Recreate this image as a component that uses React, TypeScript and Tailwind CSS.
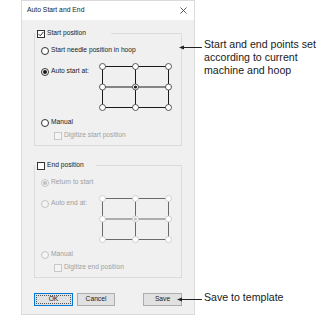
import React from "react";

type BoxProps = { checked?: boolean; disabled?: boolean };

const Radio: React.FC<BoxProps> = ({ checked, disabled }) => (
	<span
		className={
			disabled
				? "w-[8px] h-[8px] rounded-full border border-[#c4c4c4] bg-[#f4f4f4] flex items-center justify-center shrink-0"
				: "w-[8px] h-[8px] rounded-full border border-[#333] bg-white flex items-center justify-center shrink-0"
		}
	>
		{checked && (
			<span
				className={
					disabled
						? "w-[4px] h-[4px] rounded-full bg-[#c0c0c0]"
						: "w-[4px] h-[4px] rounded-full bg-[#1a1a1a]"
				}
			/>
		)}
	</span>
);

const Check: React.FC<BoxProps> = ({ checked, disabled }) => (
	<span
		className={
			disabled
				? "w-[8px] h-[8px] border border-[#c8c8c8] bg-[#f4f4f4] flex items-center justify-center shrink-0"
				: "w-[8px] h-[8px] border border-[#333] bg-white flex items-center justify-center shrink-0"
		}
	>
		{checked && (
			<svg width="6" height="6" viewBox="0 0 6 6">
				<path d="M0.6 3.1 L2.3 4.8 L5.4 0.9" fill="none" stroke="#1a1a1a" strokeWidth="0.9" />
			</svg>
		)}
	</span>
);

// 3x3 hoop position grid
const HoopGrid: React.FC<{ disabled?: boolean }> = ({ disabled }) => {
	const xs = [3.5, 36.5, 69.5];
	const ys = [3.5, 24, 44.5];
	const line = disabled ? "#6a6a6a" : "#1a1a1a";
	const ring = disabled ? "#c4c4c4" : "#333";
	return (
		<svg width="74" height="48" viewBox="0 0 74 48" className="shrink-0">
			{ys.map((y) => (
				<line key={`h${y}`} x1={xs[0]} y1={y} x2={xs[2]} y2={y} stroke={line} strokeWidth="1" />
			))}
			{xs.map((x) => (
				<line key={`v${x}`} x1={x} y1={ys[0]} x2={x} y2={ys[2]} stroke={line} strokeWidth="1" />
			))}
			{ys.map((y) =>
				xs.map((x) => (
					<circle key={`${x}-${y}`} cx={x} cy={y} r="3" fill="white" stroke={ring} strokeWidth="0.8" />
				))
			)}
			<circle cx={xs[1]} cy={ys[1]} r="1.6" fill={disabled ? "#c0c0c0" : "#1a1a1a"} />
		</svg>
	);
};

const Arrow: React.FC<{ width: number }> = ({ width }) => (
	<svg width={width} height="5" viewBox={`0 0 ${width} 5`}>
		<line x1="3" y1="2.5" x2={width} y2="2.5" stroke="#222" strokeWidth="1" />
		<path d="M0 2.5 L5 0.6 L5 4.4 Z" fill="#222" />
	</svg>
);

export default function App() {
	return (
		<div className="relative w-[329px] h-[331px] bg-white font-['Liberation_Sans',Arial,sans-serif] text-[6.7px] text-[#1a1a1a] overflow-hidden">
			{/* Dialog */}
			<div className="ml-[21px] w-[174px] h-[315px] border border-[#dadada] bg-[#f0f0f0] flex flex-col">
				<div className="h-[19px] bg-white flex items-center justify-between pl-[5px] pr-[7px]">
					<span className="text-[6.8px]">Auto Start and End</span>
					<svg width="7" height="7" viewBox="0 0 7 7">
						<path d="M0.5 0.5 L6.5 6.5 M6.5 0.5 L0.5 6.5" stroke="#333" strokeWidth="0.8" />
					</svg>
				</div>

				<div className="pl-[12px] pr-[12px] pt-[9px] flex flex-col">
					{/* Start position group */}
					<fieldset className="border border-[#dcdcdc]">
						<legend className="w-[76px] h-[9px] flex items-center gap-[2px] pl-[2px]">
							<Check checked />
							<span>Start position</span>
						</legend>
						<div className="pl-[6px] pb-[5px] flex flex-col">
							<div className="mt-[8px] h-[9px] flex items-center gap-[2px]">
								<Radio />
								<span>Start needle position in hoop</span>
							</div>
							<div className="mt-[8px] flex items-start">
								<div className="w-[58px] mt-[4px] h-[9px] flex items-center gap-[2px]">
									<Radio checked />
									<span>Auto start at:</span>
								</div>
								<HoopGrid />
							</div>
							<div className="mt-[7px] h-[9px] flex items-center gap-[2px]">
								<Radio />
								<span>Manual</span>
							</div>
							<div className="mt-[4px] ml-[13px] h-[9px] flex items-center gap-[2px] text-[#a0a0a0]">
								<Check disabled />
								<span>Digitize start position</span>
							</div>
						</div>
					</fieldset>

					{/* End position group */}
					<fieldset className="mt-[15px] border border-[#dcdcdc]">
						<legend className="w-[61px] h-[9px] flex items-center gap-[2px] pl-[2px]">
							<Check />
							<span>End position</span>
						</legend>
						<div className="pl-[6px] pb-[5px] flex flex-col text-[#a0a0a0]">
							<div className="mt-[8px] h-[9px] flex items-center gap-[2px]">
								<Radio checked disabled />
								<span>Return to start</span>
							</div>
							<div className="mt-[8px] flex items-start">
								<div className="w-[58px] mt-[4px] h-[9px] flex items-center gap-[2px]">
									<Radio disabled />
									<span>Auto end at:</span>
								</div>
								<HoopGrid disabled />
							</div>
							<div className="mt-[7px] h-[9px] flex items-center gap-[2px]">
								<Radio disabled />
								<span>Manual</span>
							</div>
							<div className="mt-[4px] ml-[13px] h-[9px] flex items-center gap-[2px]">
								<Check disabled />
								<span>Digitize end position</span>
							</div>
						</div>
					</fieldset>

					{/* Buttons */}
					<div className="mt-[15px] flex items-center">
						<button className="w-[39px] h-[13px] border border-[#0078d7] bg-[#e1e1e1] p-[1px] flex">
							<span className="flex-1 flex items-center justify-center border border-dotted border-[#555]">OK</span>
						</button>
						<button className="ml-[4px] w-[38px] h-[13px] border border-[#adadad] bg-[#e1e1e1] flex items-center justify-center">
							Cancel
						</button>
						<button className="ml-auto w-[39px] h-[13px] border border-[#adadad] bg-[#e1e1e1] flex items-center justify-center">
							Save
						</button>
					</div>
				</div>
			</div>

			{/* Callouts */}
			<div className="absolute left-[179px] top-[45px]">
				<Arrow width={23} />
			</div>
			<div className="absolute left-[204px] top-[38px] text-[10.6px] leading-[13px] text-[#1a1a1a]">
				<p>Start and end points set</p>
				<p>according to current</p>
				<p>machine and hoop</p>
			</div>
			<div className="absolute left-[177px] top-[297px]">
				<Arrow width={25} />
			</div>
			<div className="absolute left-[204px] top-[291px] text-[10.6px] leading-[13px] text-[#1a1a1a]">
				Save to template
			</div>
		</div>
	);
}
